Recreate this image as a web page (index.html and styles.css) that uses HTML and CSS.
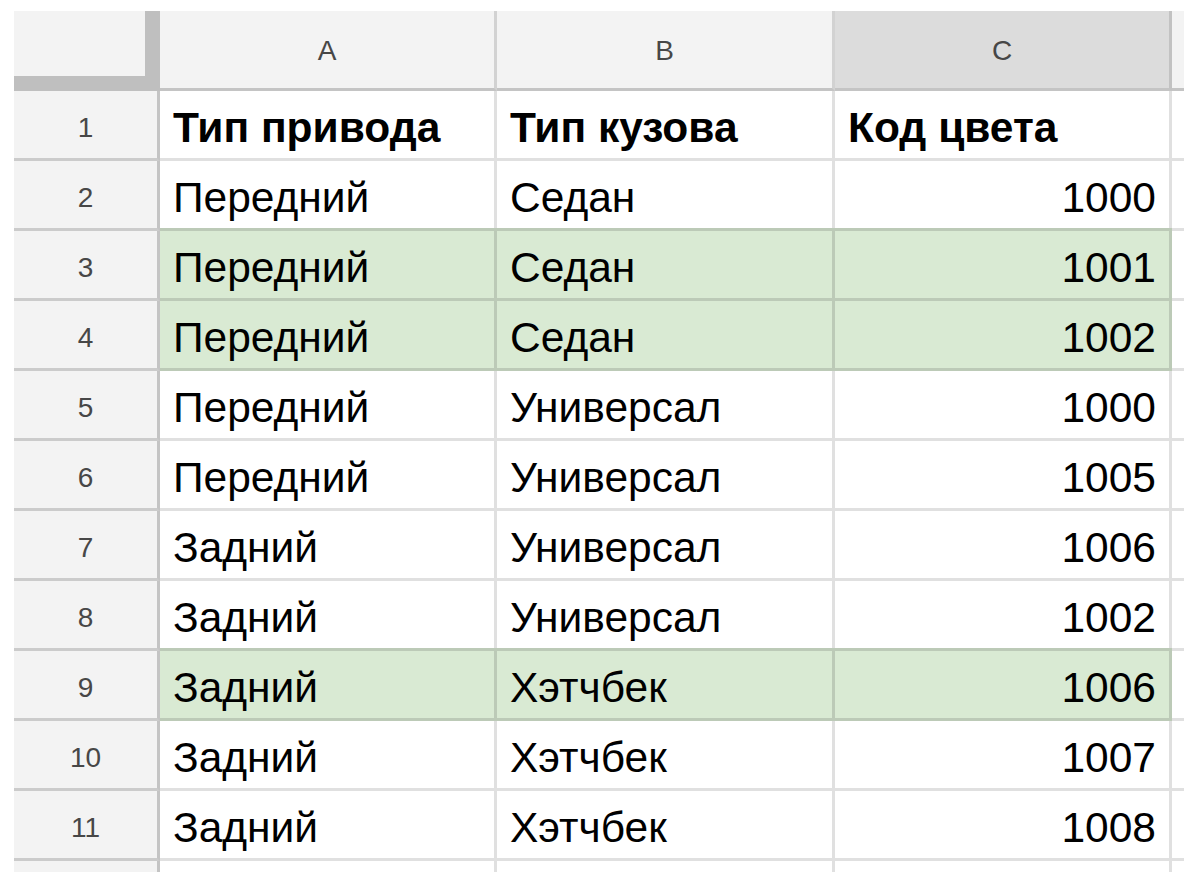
FILE: index.html
```html
<!DOCTYPE html>
<html lang="ru">
<head>
<meta charset="utf-8">
<title>Sheet</title>
<link rel="stylesheet" href="styles.css">
</head>
<body>
<div class="sheet">
  <div class="corner"></div>
  <div class="colhead">A</div>
  <div class="colhead">B</div>
  <div class="colhead selected">C</div>
  <div class="colhead extra"></div>

  <div class="rowhead">1</div>
  <div class="cell bold">Тип привода</div>
  <div class="cell bold">Тип кузова</div>
  <div class="cell bold">Код цвета</div>
  <div class="cell extra"></div>

  <div class="rowhead">2</div>
  <div class="cell">Передний</div>
  <div class="cell">Седан</div>
  <div class="cell num">1000</div>
  <div class="cell extra"></div>

  <div class="rowhead">3</div>
  <div class="cell hl">Передний</div>
  <div class="cell hl">Седан</div>
  <div class="cell num hl">1001</div>
  <div class="cell extra"></div>

  <div class="rowhead">4</div>
  <div class="cell hl">Передний</div>
  <div class="cell hl">Седан</div>
  <div class="cell num hl">1002</div>
  <div class="cell extra"></div>

  <div class="rowhead">5</div>
  <div class="cell">Передний</div>
  <div class="cell">Универсал</div>
  <div class="cell num">1000</div>
  <div class="cell extra"></div>

  <div class="rowhead">6</div>
  <div class="cell">Передний</div>
  <div class="cell">Универсал</div>
  <div class="cell num">1005</div>
  <div class="cell extra"></div>

  <div class="rowhead">7</div>
  <div class="cell">Задний</div>
  <div class="cell">Универсал</div>
  <div class="cell num">1006</div>
  <div class="cell extra"></div>

  <div class="rowhead">8</div>
  <div class="cell">Задний</div>
  <div class="cell">Универсал</div>
  <div class="cell num">1002</div>
  <div class="cell extra"></div>

  <div class="rowhead">9</div>
  <div class="cell hl">Задний</div>
  <div class="cell hl">Хэтчбек</div>
  <div class="cell num hl">1006</div>
  <div class="cell extra"></div>

  <div class="rowhead">10</div>
  <div class="cell">Задний</div>
  <div class="cell">Хэтчбек</div>
  <div class="cell num">1007</div>
  <div class="cell extra"></div>

  <div class="rowhead">11</div>
  <div class="cell">Задний</div>
  <div class="cell">Хэтчбек</div>
  <div class="cell num">1008</div>
  <div class="cell extra"></div>

  <div class="rowhead"></div>
  <div class="cell"></div>
  <div class="cell"></div>
  <div class="cell"></div>
  <div class="cell extra"></div>
</div>
</body>
</html>
```

FILE: styles.css
```css
html, body {
  margin: 0;
  padding: 0;
  background: #ffffff;
  overflow: hidden;
  height: 872px;
}

.sheet {
  margin: 11px 0 0 14px;
  display: grid;
  grid-template-columns: 146px 337px 338px 337px 1fr;
  grid-template-rows: 80px;
  grid-auto-rows: 70px;
  font-family: "Liberation Sans", Arial, sans-serif;
}

.sheet > div {
  box-sizing: border-box;
  min-width: 0;
  overflow: hidden;
  white-space: nowrap;
}

.corner {
  background: #f3f3f3;
  border-right: 15px solid #bfbfbf;
  border-bottom: 15px solid #bfbfbf;
}

.colhead {
  background: #f3f3f3;
  border-right: 3px solid #d2d2d2;
  border-bottom: 3px solid #c4c4c4;
  color: #474747;
  font-size: 28px;
  display: flex;
  align-items: center;
  justify-content: center;
  padding-top: 2px;
}

.colhead.selected {
  background: #dcdcdc;
  border-right-color: #c2c2c2;
}

.colhead.extra {
  border-right: none;
}

.rowhead {
  background: #f3f3f3;
  border-right: 3px solid #c4c4c4;
  border-bottom: 3px solid #cbcbcb;
  color: #474747;
  font-size: 28px;
  display: flex;
  align-items: center;
  justify-content: center;
  padding-top: 6px;
}

.cell {
  background: #ffffff;
  border-right: 3px solid #e0e0e0;
  border-bottom: 3px solid #e0e0e0;
  color: #000000;
  font-size: 42.5px;
  line-height: 1;
  display: flex;
  align-items: flex-end;
  padding: 0 13px 9px 13px;
}

.cell.bold {
  font-weight: bold;
}

.cell.num {
  justify-content: flex-end;
}

.cell.extra {
  border-right: none;
}

.cell.hl {
  background: #d9ead3;
  border-right-color: #bccab7;
  border-bottom-color: #bccab7;
  box-shadow: 0 -3px 0 #bccab7;
}
```
